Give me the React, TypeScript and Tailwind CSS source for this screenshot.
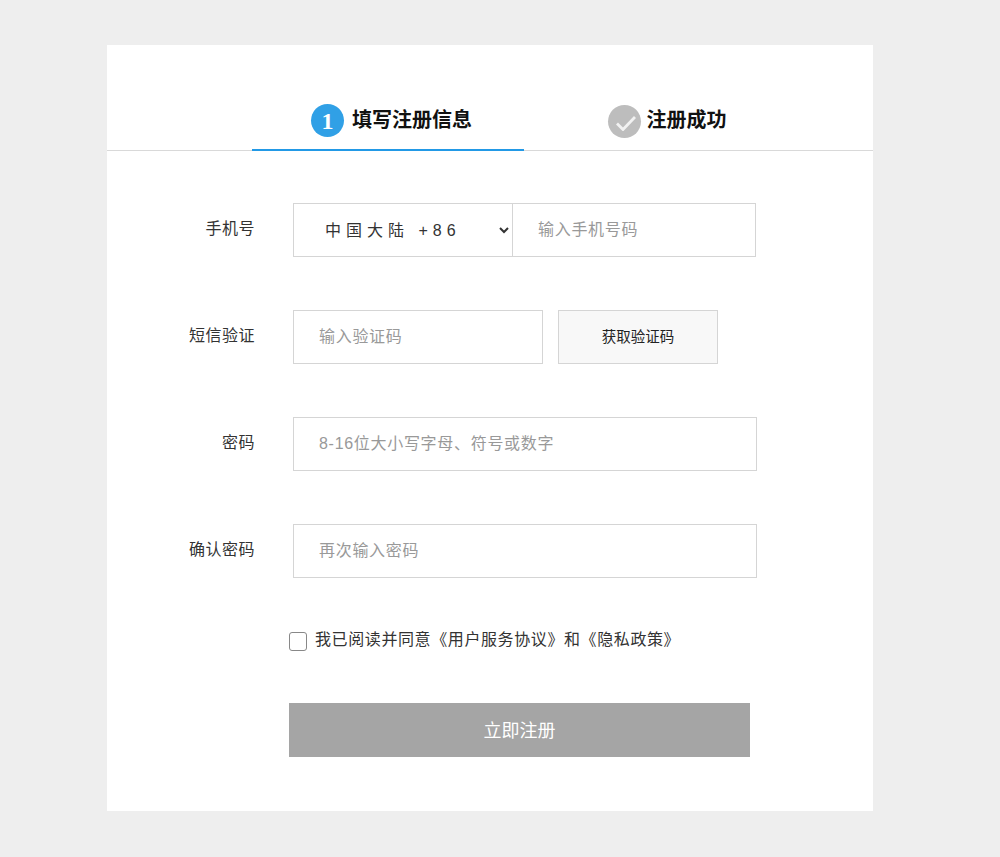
import React from "react";

const font = { fontFamily: '"Liberation Sans", "Noto Sans CJK SC", sans-serif' };

function Row({ label, className = "", children }: { label: string; className?: string; children: React.ReactNode }) {
  return (
    <div className={`flex items-start ${className}`}>
      <label className="w-[148px] h-[51px] flex items-center justify-end text-[16px] text-[#333] tracking-[0.5px]">{label}</label>
      <div className="ml-[38px] flex">{children}</div>
    </div>
  );
}

const inputCls =
  "h-[54px] border border-[#d5d5d5] bg-white pl-[25px] text-[16px] text-[#333] outline-none placeholder:text-[#999] tracking-[0.7px]";

export default function App() {
  return (
    <div className="min-h-[857px] bg-[#eeeeee] pt-[45px] pl-[107px]" style={font}>
      <div className="w-[766px] h-[766px] bg-white">
        <div className="h-[106px] border-b border-[#d9d9d9] flex pl-[145px]">
          <div className="w-[272px] h-[106px] border-b-2 border-[#2299e6] flex items-start justify-center pl-[7px] pt-[59px] gap-[8px]">
            <span className="w-[33px] h-[33px] rounded-full bg-[#30a0e6] text-white font-bold flex items-center justify-center text-[24px]" style={{ fontFamily: '"Liberation Serif", serif' }}>1</span>
            <span className="mt-[1px] text-[20px] leading-[30px] font-bold text-[#111]">填写注册信息</span>
          </div>
          <div className="w-[286px] flex items-start justify-center pt-[59px] gap-[6px]">
            <span className="w-[33px] h-[33px] mt-[1px] rounded-full bg-[#bdbdbd] flex items-center justify-center">
              <svg width="23" height="19" viewBox="0 0 23 19" fill="none"><path d="M4 11.5 L10 17.5 L22 5" stroke="#f2f2f2" strokeWidth="2.8" /></svg>
            </span>
            <span className="mt-[1px] text-[20px] leading-[30px] font-bold text-[#111]">注册成功</span>
          </div>
        </div>

        <div className="pt-[52px]">
          <Row label="手机号">
            <select className="w-[220px] h-[54px] border border-[#d5d5d5] bg-white pl-[27px] text-[16px] text-[#333] outline-none tracking-[5px]" defaultValue="cn">
              <option value="cn">中国大陆 +86</option>
            </select>
            <input className={`${inputCls} w-[243px] border-l-0`} placeholder="输入手机号码" />
          </Row>
          <Row label="短信验证" className="mt-[53px]">
            <input className={`${inputCls} w-[250px]`} placeholder="输入验证码" />
            <button className="ml-[15px] w-[160px] h-[54px] pt-[2px] border border-[#d5d5d5] bg-[#f8f8f8] text-[14.5px] text-[#222]">获取验证码</button>
          </Row>
          <Row label="密码" className="mt-[53px]">
            <input className={`${inputCls} w-[464px]`} placeholder="8-16位大小写字母、符号或数字" />
          </Row>
          <Row label="确认密码" className="mt-[53px]">
            <input className={`${inputCls} w-[464px]`} placeholder="再次输入密码" />
          </Row>
          <div className="mt-[53px] ml-[182px] flex items-start">
            <input type="checkbox" className="appearance-none w-[18px] h-[19px] mt-[1px] rounded-[3px] border border-[#888888] bg-white" />
            <span className="ml-[8px] mt-[2px] text-[16px] leading-[14px] text-[#333] tracking-[0.6px]">我已阅读并同意《用户服务协议》和《隐私政策》</span>
          </div>
          <button className="block mt-[52px] ml-[182px] w-[461px] h-[54px] pt-[2px] bg-[#a5a5a5] text-white text-[18px]">立即注册</button>
        </div>
      </div>
    </div>
  );
}
